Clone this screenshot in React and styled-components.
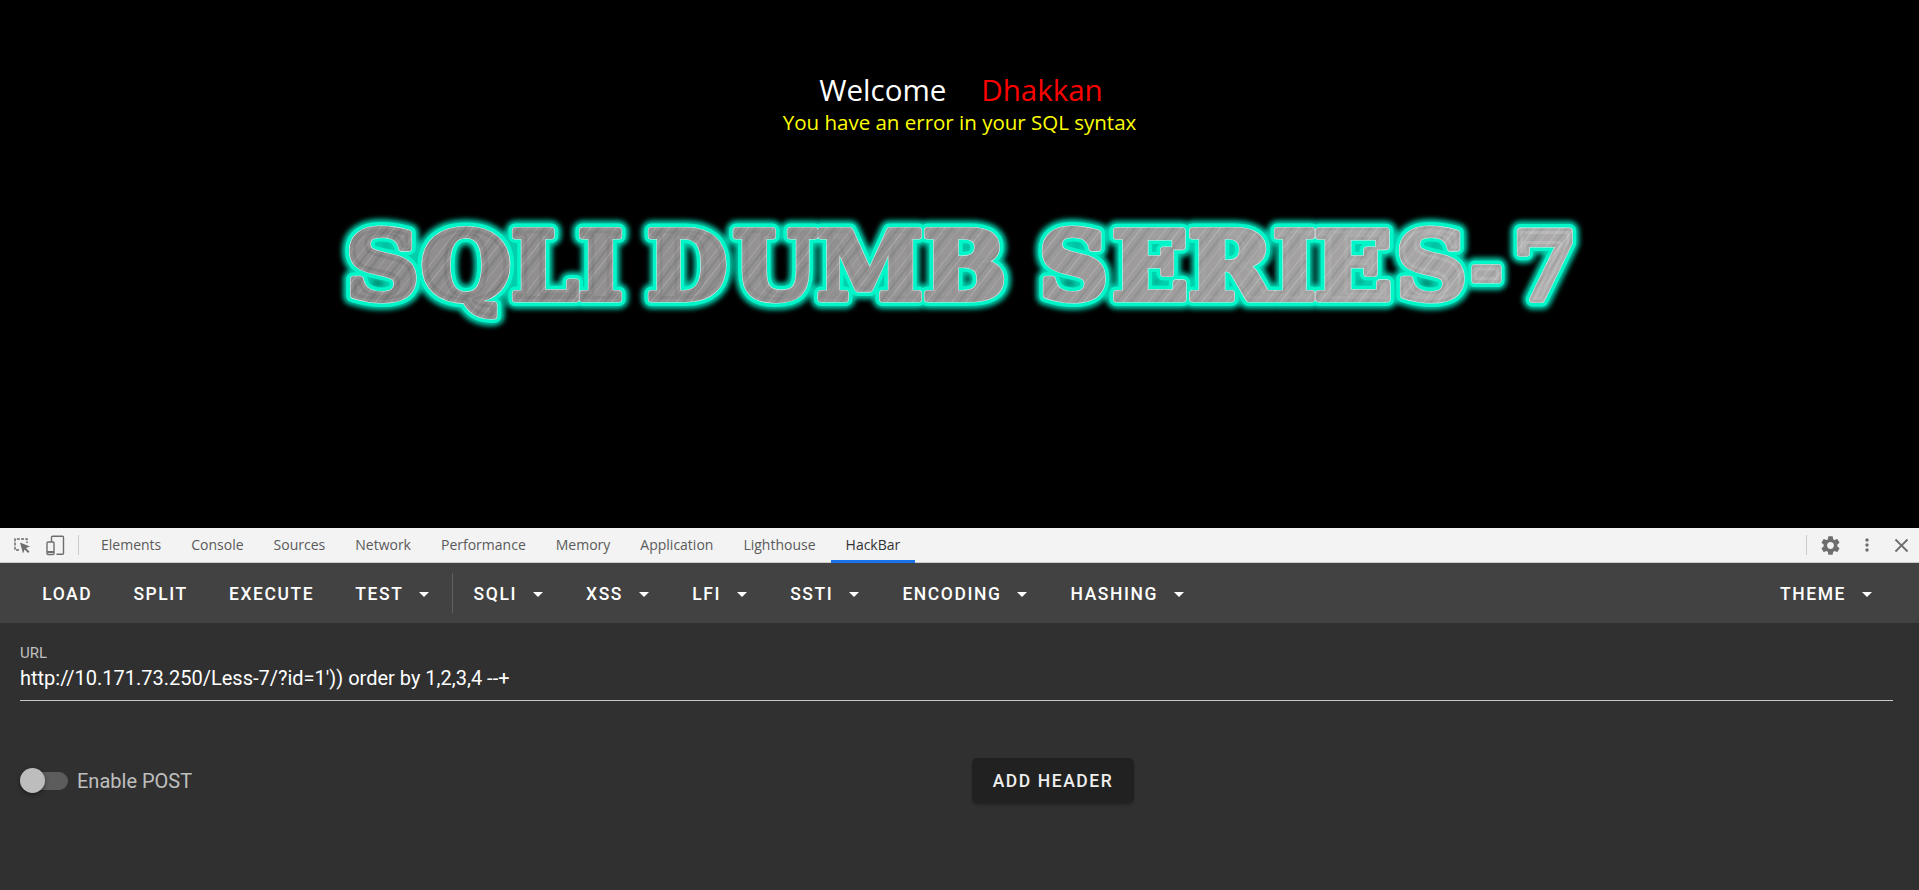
import React from 'react';
import styled, { createGlobalStyle } from 'styled-components';
import { MdSettings, MdMoreVert, MdClose } from 'react-icons/md';

const GlobalStyle = createGlobalStyle`
  html, body { margin: 0; padding: 0; background: #000; overflow: hidden; }
  body { font-family: Roboto, "Liberation Sans", sans-serif; }
`;

const Page = styled.div`
  width: 1919px;
  height: 890px;
  display: flex;
  flex-direction: column;
`;

const Viewport = styled.main`
  height: 528px;
  background: #000;
  display: flex;
  flex-direction: column;
  align-items: center;
  padding-top: 70px;
  box-sizing: border-box;
  font-family: "Open Sans", "Noto Sans", sans-serif;
`;

const Welcome = styled.div`
  display: flex;
  gap: 35px;
  font-size: 29.5px;
  line-height: 40px;
  color: #fff;
  margin-left: 3px;
`;

const Name = styled.span`
  color: #f00;
`;

const SqlError = styled.div`
  font-size: 20.5px;
  line-height: 25px;
  color: #ff0;
`;

const Banner = styled.svg`
  display: block;
  width: 1919px;
  height: 140px;
  margin-top: 72px;
  flex: none;
`;

// letter, left edge and width, read off the reference
const LETTERS = [
  ['S', 346, 73], ['Q', 421, 90], ['L', 511, 67], ['I', 578, 45],
  ['D', 647, 80], ['U', 733, 84], ['M', 817, 106], ['B', 923, 83],
  ['S', 1039, 69], ['E', 1112, 76], ['R', 1188, 85], ['I', 1273, 43],
  ['E', 1314, 78], ['S', 1396, 71], ['-', 1470, 33], ['7', 1513, 64],
];

function BannerArt() {
  const letter = () =>
    LETTERS.map(([c, x, w], i) => (
      <text key={i} x={x} y="92" textLength={w} lengthAdjust="spacingAndGlyphs">
        {c}
      </text>
    ));
  return (
    <Banner viewBox="0 0 1919 140" fontFamily="'DejaVu Serif', serif" fontWeight="700" fontSize="94">
      <defs>
        <pattern id="brushed" width="31" height="31" patternUnits="userSpaceOnUse" patternTransform="rotate(-52)">
          <rect width="31" height="31" fill="#9c9a9b" />
          <rect y="2" width="31" height="1" fill="#b0afb0" />
          <rect y="7" width="31" height="2" fill="#8e8d8e" />
          <rect y="13" width="31" height="1" fill="#b6b5b6" />
          <rect y="18" width="31" height="3" fill="#908f90" />
          <rect y="25" width="31" height="1" fill="#aaa9aa" />
        </pattern>
        <linearGradient id="sheen" x1="0" x2="1919" y1="0" y2="0" gradientUnits="userSpaceOnUse">
          <stop offset="0.2" stopColor="#000" stopOpacity="0.08" />
          <stop offset="0.8" stopColor="#fff" stopOpacity="0.16" />
        </linearGradient>
        <filter id="glow" x="-30%" y="-30%" width="160%" height="160%">
          <feGaussianBlur stdDeviation="2.4" />
        </filter>
      </defs>
      <g filter="url(#glow)" fill="#00d0ae" stroke="#00d0ae" strokeWidth="20" strokeLinejoin="round">
        {letter()}
      </g>
      <g fill="#00f5c8" stroke="#00f5c8" strokeWidth="14" strokeLinejoin="round">
        {letter()}
      </g>
      <g fill="#d8e8e4" stroke="#d8e8e4" strokeWidth="7" strokeLinejoin="round">
        {letter()}
      </g>
      <g fill="url(#brushed)" stroke="url(#brushed)" strokeWidth="5.8" strokeLinejoin="round">
        {letter()}
      </g>
      <g fill="url(#sheen)" stroke="url(#sheen)" strokeWidth="5.8" strokeLinejoin="round">
        {letter()}
      </g>
    </Banner>
  );
}

const DevTools = styled.div`
  flex: 1;
  display: flex;
  flex-direction: column;
  min-height: 0;
`;

const TabBar = styled.nav`
  height: 35px;
  box-sizing: border-box;
  background: #f3f3f3;
  border-bottom: 1px solid #ccc;
  display: flex;
  align-items: stretch;
  padding-left: 13px;
  font-family: "Open Sans", "Noto Sans", sans-serif;
`;

const IconSlot = styled.span`
  display: flex;
  align-items: center;
  justify-content: center;
  width: ${(p) => p.$w}px;
  margin-left: ${(p) => p.$ml || 0}px;
  margin-right: ${(p) => p.$mr || 0}px;
  color: #6e6e6e;
`;

const BarDivider = styled.span`
  width: 1px;
  height: 20px;
  align-self: center;
  background: #ccc;
  margin-right: ${(p) => p.$mr || 0}px;
`;

const Tab = styled.span`
  display: flex;
  align-items: center;
  padding: 1px 15px 0;
  font-size: 14px;
  margin-bottom: -1px;
  color: ${(p) => (p.$active ? '#333' : '#5a5a5a')};
  border-bottom: 3px solid ${(p) => (p.$active ? '#1a73e8' : 'transparent')};
  box-sizing: border-box;
`;

const TabRight = styled.div`
  margin-left: auto;
  display: flex;
  align-items: center;
  padding-right: 6px;
`;

const Toolbar = styled.div`
  height: 60px;
  background: #424242;
  display: flex;
  align-items: center;
  padding-left: 21.6px;
  padding-right: 24.4px;
`;

const ToolButton = styled.button`
  height: 45px;
  border: 0;
  background: none;
  color: #fff;
  padding: 2px 20.6px 0;
  display: flex;
  align-items: center;
  font: 500 17.5px Roboto, sans-serif;
  letter-spacing: 1.56px;
  text-transform: uppercase;
  white-space: nowrap;
`;

const Caret = styled.i`
  width: 0;
  height: 0;
  margin-left: 16px;
  margin-right: 2px;
  border-left: 5px solid transparent;
  border-right: 5px solid transparent;
  border-top: 5px solid #fff;
`;

const ToolDivider = styled.span`
  width: 1px;
  height: 40px;
  background: #5f5f5f;
`;

const Spacer = styled.span`
  flex: 1;
`;

const Body = styled.section`
  flex: 1;
  background: #303030;
  padding: 20px 26px 0 20px;
`;

const UrlField = styled.div`
  border-bottom: 1px solid #c8c8c8;
  height: 57px;
  display: flex;
  flex-direction: column;
`;

const UrlLabel = styled.label`
  font-size: 15px;
  line-height: 20px;
  color: rgba(255, 255, 255, 0.7);
`;

const UrlValue = styled.div`
  font-size: 20px;
  line-height: 30px;
  color: #fff;
`;

const Options = styled.div`
  display: grid;
  grid-template-columns: 952px auto;
  justify-content: start;
  align-items: center;
  margin-top: 57px;
`;

const PostToggle = styled.div`
  display: flex;
  align-items: center;
  gap: 9px;
  font-size: 20px;
  color: rgba(255, 255, 255, 0.7);
`;

const Track = styled.span`
  position: relative;
  width: 48px;
  height: 18px;
  border-radius: 9px;
  background: #5c5c5c;
`;

const Thumb = styled.span`
  position: absolute;
  left: 0;
  top: -3.5px;
  width: 25px;
  height: 25px;
  border-radius: 50%;
  background: #bdbdbd;
  box-shadow: 0 2px 4px rgba(0, 0, 0, 0.4);
`;

const AddHeader = styled.button`
  width: 162px;
  height: 45px;
  border: 0;
  border-radius: 5px;
  background: #212121;
  color: #eee;
  font: 500 17.5px Roboto, sans-serif;
  letter-spacing: 1.56px;
  box-shadow: 0 3px 3px -2px rgba(0, 0, 0, 0.2), 0 2px 3px rgba(0, 0, 0, 0.14);
`;

const TABS = ['Elements', 'Console', 'Sources', 'Network', 'Performance', 'Memory', 'Application', 'Lighthouse', 'HackBar'];
const MENUS = ['SQLi', 'XSS', 'LFI', 'SSTI', 'Encoding', 'Hashing'];

export default function App() {
  return (
    <Page>
      <GlobalStyle />
      <Viewport>
        <Welcome>
          <span>Welcome</span>
          <Name>Dhakkan</Name>
        </Welcome>
        <SqlError>You have an error in your SQL syntax</SqlError>
        <BannerArt />
      </Viewport>
      <DevTools>
        <TabBar>
          <IconSlot $w={18} $mr={15}>
            <svg width="19" height="18" viewBox="0 0 18 18" fill="none">
              <path d="M6 14H2V3h12v4" stroke="#6e6e6e" strokeWidth="1.5" strokeDasharray="3 1.2" />
              <path d="M7 6.5l10 4-4 1.6 3.5 3.6-1.4 1.4-3.5-3.6-1.6 4z" fill="#6e6e6e" />
            </svg>
          </IconSlot>
          <IconSlot $w={19} $mr={13}>
            <svg width="19" height="21" viewBox="0 0 19 21" fill="none" stroke="#6e6e6e" strokeWidth="1.4">
              <path d="M5.5 7V2.2a1 1 0 0 1 1-1h10a1 1 0 0 1 1 1v16a1 1 0 0 1-1 1h-6" />
              <rect x="1" y="7" width="7" height="12.5" rx="1" />
              <path d="M1 17h7" strokeWidth="2" />
            </svg>
          </IconSlot>
          <BarDivider $mr={7} />
          {TABS.map((t) => (
            <Tab key={t} $active={t === 'HackBar'}>
              {t}
            </Tab>
          ))}
          <TabRight>
            <BarDivider />
            <IconSlot $w={38} $ml={4} $mr={8}>
              <MdSettings size={23} />
            </IconSlot>
            <IconSlot $w={20} $mr={12}>
              <MdMoreVert size={24} />
            </IconSlot>
            <IconSlot $w={24}>
              <MdClose size={23} />
            </IconSlot>
          </TabRight>
        </TabBar>
        <Toolbar>
          <ToolButton>Load</ToolButton>
          <ToolButton>Split</ToolButton>
          <ToolButton>Execute</ToolButton>
          <ToolButton>
            Test
            <Caret />
          </ToolButton>
          <ToolDivider />
          {MENUS.map((m) => (
            <ToolButton key={m}>
              {m}
              <Caret />
            </ToolButton>
          ))}
          <Spacer />
          <ToolButton>
            Theme
            <Caret />
          </ToolButton>
        </Toolbar>
        <Body>
          <UrlField>
            <UrlLabel>URL</UrlLabel>
            <UrlValue>http://10.171.73.250/Less-7/?id=1')) order by 1,2,3,4 --+</UrlValue>
          </UrlField>
          <Options>
            <PostToggle>
              <Track>
                <Thumb />
              </Track>
              Enable POST
            </PostToggle>
            <AddHeader>ADD HEADER</AddHeader>
          </Options>
        </Body>
      </DevTools>
    </Page>
  );
}
